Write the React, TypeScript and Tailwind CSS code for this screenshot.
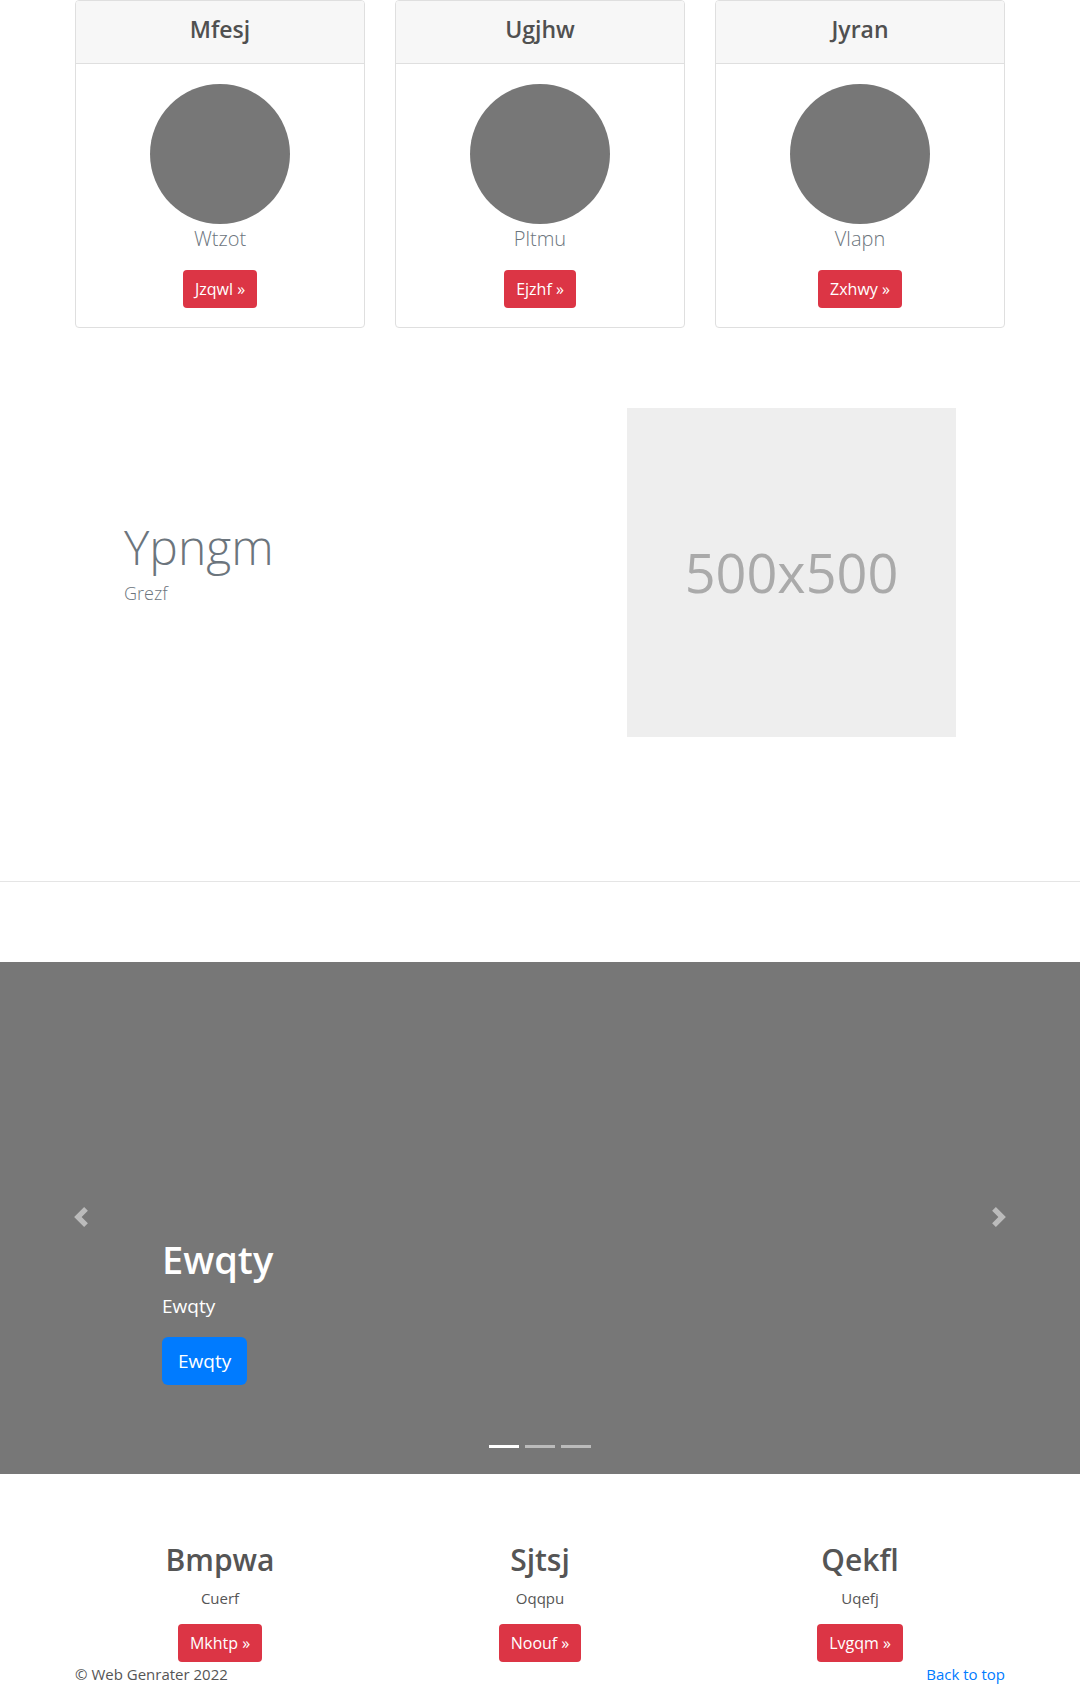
import React from "react";

const font = { fontFamily: '"Open Sans", "Noto Sans", Arial, sans-serif' };

function Card({ title, name, btn }: { title: string; name: string; btn: string }) {
  return (
    <div className="w-[290px] h-[328px] border border-[#dfdfdf] rounded-[4px] flex flex-col overflow-hidden">
      <div className="h-[63px] bg-[#f7f7f7] border-b border-[#dfdfdf] flex items-center justify-center pb-[6px]">
        <h4 className="text-[23px] leading-[29px] font-semibold text-[#505050]">{title}</h4>
      </div>
      <div className="flex flex-col items-center pt-[20px]">
        <div className="w-[140px] h-[140px] rounded-full bg-[#777777]" />
        <p className="text-[20px] leading-[30px] font-light text-[#6c757d] mb-[16px]">{name}</p>
        <a className="h-[38px] px-[12px] rounded-[4px] bg-[#dc3545] text-white text-[16px] flex items-center">
          {btn} »
        </a>
      </div>
    </div>
  );
}

function Col({ title, sub, btn }: { title: string; sub: string; btn: string }) {
  return (
    <div className="w-[320px] flex flex-col items-center">
      <h2 className="text-[30px] leading-[38px] font-semibold text-[#555555] mb-[7px]">{title}</h2>
      <p className="text-[15px] leading-[24px] text-[#555555] mb-[14px]">{sub}</p>
      <a className="h-[38px] px-[12px] rounded-[4px] bg-[#dc3545] text-white text-[16px] flex items-center">
        {btn} »
      </a>
    </div>
  );
}

export default function App() {
  return (
    <div className="w-[1080px] bg-white" style={font}>
      {/* Cards */}
      <div className="w-[930px] mx-auto flex justify-between">
        <Card title="Mfesj" name="Wtzot" btn="Jzqwl" />
        <Card title="Ugjhw" name="Pltmu" btn="Ejzhf" />
        <Card title="Jyran" name="Vlapn" btn="Zxhwy" />
      </div>

      {/* Featurette */}
      <div className="w-[930px] mx-auto flex items-center pt-[80px] pb-[64px]">
        <div className="flex-1 pl-[49px] flex flex-col pb-[24px]">
          <h1 className="text-[48px] leading-[60px] font-light text-[#6c757d]">Ypngm</h1>
          <p className="mt-[4px] text-[18px] leading-[24px] font-light text-[#6c757d]">Grezf</p>
        </div>
        <div className="w-[329px] h-[329px] mr-[49px] bg-[#eeeeee] flex items-center justify-center">
          <span className="text-[54px] text-[#aaaaaa]">500x500</span>
        </div>
      </div>

      <hr className="border-0 border-t border-[#e5e5e5] mt-[80px] mb-[80px]" />

      {/* Carousel */}
      <div className="relative h-[512px] bg-[#777777] flex flex-col justify-end pl-[162px] pb-[89px]">
        <h1 className="text-[38px] leading-[48px] font-semibold text-white mb-[8px]">Ewqty</h1>
        <p className="text-[19px] leading-[30px] text-white mb-[16px]">Ewqty</p>
        <div>
          <a className="inline-flex items-center h-[48px] px-[16px] rounded-[6px] bg-[#007bff] text-white text-[19px]">
            Ewqty
          </a>
        </div>

        <div className="absolute left-[71px] top-[245px] w-[20px] h-[20px] opacity-50">
          <svg viewBox="0 0 8 8" width="20" height="20" fill="#ffffff">
            <path d="M5.25 0l-4 4 4 4 1.5-1.5L4.25 4l2.5-2.5L5.25 0z" />
          </svg>
        </div>
        <div className="absolute right-[71px] top-[245px] w-[20px] h-[20px] opacity-50">
          <svg viewBox="0 0 8 8" width="20" height="20" fill="#ffffff">
            <path d="M2.75 0l-1.5 1.5L3.75 4l-2.5 2.5L2.75 8l4-4-4-4z" />
          </svg>
        </div>
        <div className="absolute left-0 right-0 bottom-[26px] flex justify-center gap-[6px]">
          <span className="w-[30px] h-[3px] bg-white" />
          <span className="w-[30px] h-[3px] bg-white opacity-50" />
          <span className="w-[30px] h-[3px] bg-white opacity-50" />
        </div>
      </div>

      {/* Marketing */}
      <div className="w-[960px] mx-auto flex pt-[67px]">
        <Col title="Bmpwa" sub="Cuerf" btn="Mkhtp" />
        <Col title="Sjtsj" sub="Oqqpu" btn="Noouf" />
        <Col title="Qekfl" sub="Uqefj" btn="Lvgqm" />
      </div>

      {/* Footer */}
      <div className="w-[930px] mx-auto flex justify-between text-[15px] leading-[24px]">
        <p className="text-[#555555]">© Web Genrater 2022</p>
        <a className="text-[#007bff]">Back to top</a>
      </div>
      <div className="h-[40px]" />
    </div>
  );
}
